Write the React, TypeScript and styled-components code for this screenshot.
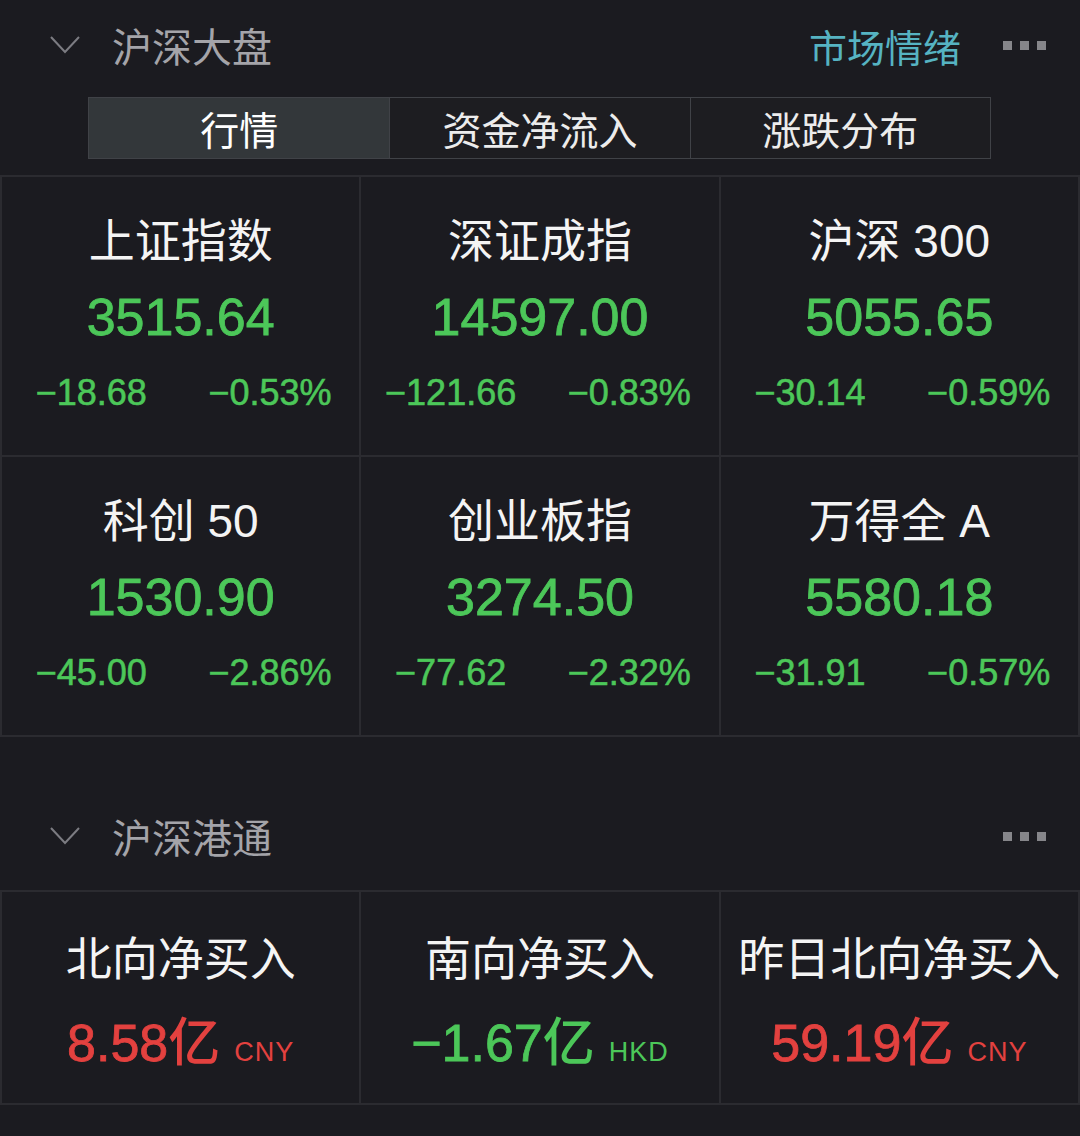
import styled, { createGlobalStyle } from 'styled-components';

const GlobalStyle = createGlobalStyle`
  html, body {
    margin: 0;
    padding: 0;
    background: #1b1b20;
  }
  body {
    font-family: "Liberation Sans", "Noto Sans CJK SC", sans-serif;
    color: #f2f2f2;
  }
`;

const Page = styled.div`
  width: 1080px;
  display: flex;
  flex-direction: column;
`;

const SectionHeader = styled.div<{ $top?: number }>`
  height: 90px;
  margin-top: ${(p) => p.$top || 0}px;
  display: flex;
  align-items: center;
  padding-left: 50px;
`;

const Chevron = styled.svg`
  width: 30px;
  height: 20px;
  flex-shrink: 0;
`;

const SectionTitle = styled.div`
  margin-left: 32px;
  font-size: 40px;
  color: #a4a4a9;
  font-family: "Noto Sans CJK SC", sans-serif;
`;

const HeaderRight = styled.div`
  margin-left: auto;
  display: flex;
  align-items: center;
  padding-right: 34px;
`;

const MoodLink = styled.div`
  font-size: 38px;
  color: #56b3c2;
  font-family: "Noto Sans CJK SC", sans-serif;
  margin-right: 42px;
`;

const Dots = styled.div`
  display: flex;
  gap: 8px;
`;

const Dot = styled.span`
  width: 9px;
  height: 9px;
  background: #86868a;
  display: block;
`;

const Tabs = styled.div`
  margin: 7px 0 0 88px;
  width: 903px;
  height: 62px;
  display: grid;
  grid-template-columns: repeat(3, 1fr);
  border: 1px solid #404247;
  box-sizing: border-box;
  background: #1d1d21;
`;

const Tab = styled.div<{ $active?: boolean }>`
  display: flex;
  align-items: center;
  justify-content: center;
  font-size: 39px;
  font-family: "Noto Sans CJK SC", sans-serif;
  color: ${(p) => (p.$active ? '#ffffff' : '#ececec')};
  background: ${(p) => (p.$active ? '#33373a' : 'transparent')};
  & + & {
    border-left: 1px solid #404247;
  }
`;

const Grid = styled.div<{ $top: number }>`
  margin-top: ${(p) => p.$top}px;
  display: grid;
  grid-template-columns: repeat(3, 1fr);
  gap: 2px;
  padding: 2px;
  background: #2b2b30;
`;

const Cell = styled.div<{ $h: number; $shift?: number }>`
  height: ${(p) => p.$h}px;
  box-sizing: border-box;
  padding-top: ${(p) => p.$shift || 0}px;
  background: #1b1b20;
  display: flex;
  flex-direction: column;
  justify-content: center;
  align-items: center;
`;

const Name = styled.div<{ $lh: number }>`
  font-size: 46px;
  line-height: ${(p) => p.$lh}px;
  color: #f4f4f4;
  white-space: nowrap;
`;

const Value = styled.div<{ $color: string; $lh: number }>`
  font-size: 52px;
  line-height: ${(p) => p.$lh}px;
  color: ${(p) => p.$color};
  -webkit-text-stroke: 0.8px ${(p) => p.$color};
  white-space: nowrap;
  display: flex;
  align-items: baseline;
`;

const Unit = styled.span`
  font-family: "Noto Sans CJK SC", sans-serif;
  -webkit-text-stroke: 0;
  font-weight: 500;
`;

const Currency = styled.span`
  font-size: 27px;
  margin-left: 14px;
  letter-spacing: 1px;
  -webkit-text-stroke: 0;
`;

const ChangeRow = styled.div`
  width: 100%;
  display: grid;
  grid-template-columns: 1fr 1fr;
  font-size: 36px;
  line-height: 76px;
  color: #4cc759;
  -webkit-text-stroke: 0.6px #4cc759;
  text-align: center;
`;

const GREEN = '#4cc759';
const RED = '#e3413f';

const indices = [
  { name: '上证指数', value: '3515.64', chg: '−18.68', pct: '−0.53%' },
  { name: '深证成指', value: '14597.00', chg: '−121.66', pct: '−0.83%' },
  { name: '沪深 300', value: '5055.65', chg: '−30.14', pct: '−0.59%' },
  { name: '科创 50', value: '1530.90', chg: '−45.00', pct: '−2.86%' },
  { name: '创业板指', value: '3274.50', chg: '−77.62', pct: '−2.32%' },
  { name: '万得全 A', value: '5580.18', chg: '−31.91', pct: '−0.57%' },
];

const flows = [
  { name: '北向净买入', value: '8.58', cur: 'CNY', color: RED },
  { name: '南向净买入', value: '−1.67', cur: 'HKD', color: GREEN },
  { name: '昨日北向净买入', value: '59.19', cur: 'CNY', color: RED },
];

function Header({ title, top, mood }: { title: string; top?: number; mood?: boolean }) {
  return (
    <SectionHeader $top={top}>
      <Chevron viewBox="0 0 30 20">
        <polyline points="1,2 15,17 29,2" fill="none" stroke="#7c7c82" strokeWidth="2" />
      </Chevron>
      <SectionTitle>{title}</SectionTitle>
      <HeaderRight>
        {mood && <MoodLink>市场情绪</MoodLink>}
        <Dots>
          <Dot />
          <Dot />
          <Dot />
        </Dots>
      </HeaderRight>
    </SectionHeader>
  );
}

export default function App() {
  return (
    <>
      <GlobalStyle />
      <Page>
        <Header title="沪深大盘" mood />
        <Tabs>
          <Tab $active>行情</Tab>
          <Tab>资金净流入</Tab>
          <Tab>涨跌分布</Tab>
        </Tabs>
        <Grid $top={16}>
          {indices.map((it) => (
            <Cell key={it.name} $h={278} $shift={2}>
              <Name $lh={76}>{it.name}</Name>
              <Value $color={GREEN} $lh={76}>{it.value}</Value>
              <ChangeRow>
                <span>{it.chg}</span>
                <span>{it.pct}</span>
              </ChangeRow>
            </Cell>
          ))}
        </Grid>
        <Header title="沪深港通" top={54} />
        <Grid $top={9}>
          {flows.map((f) => (
            <Cell key={f.name} $h={211} $shift={16}>
              <Name $lh={80}>{f.name}</Name>
              <Value $color={f.color} $lh={80}>
                {f.value}
                <Unit>亿</Unit>
                <Currency>{f.cur}</Currency>
              </Value>
            </Cell>
          ))}
        </Grid>
      </Page>
    </>
  );
}
